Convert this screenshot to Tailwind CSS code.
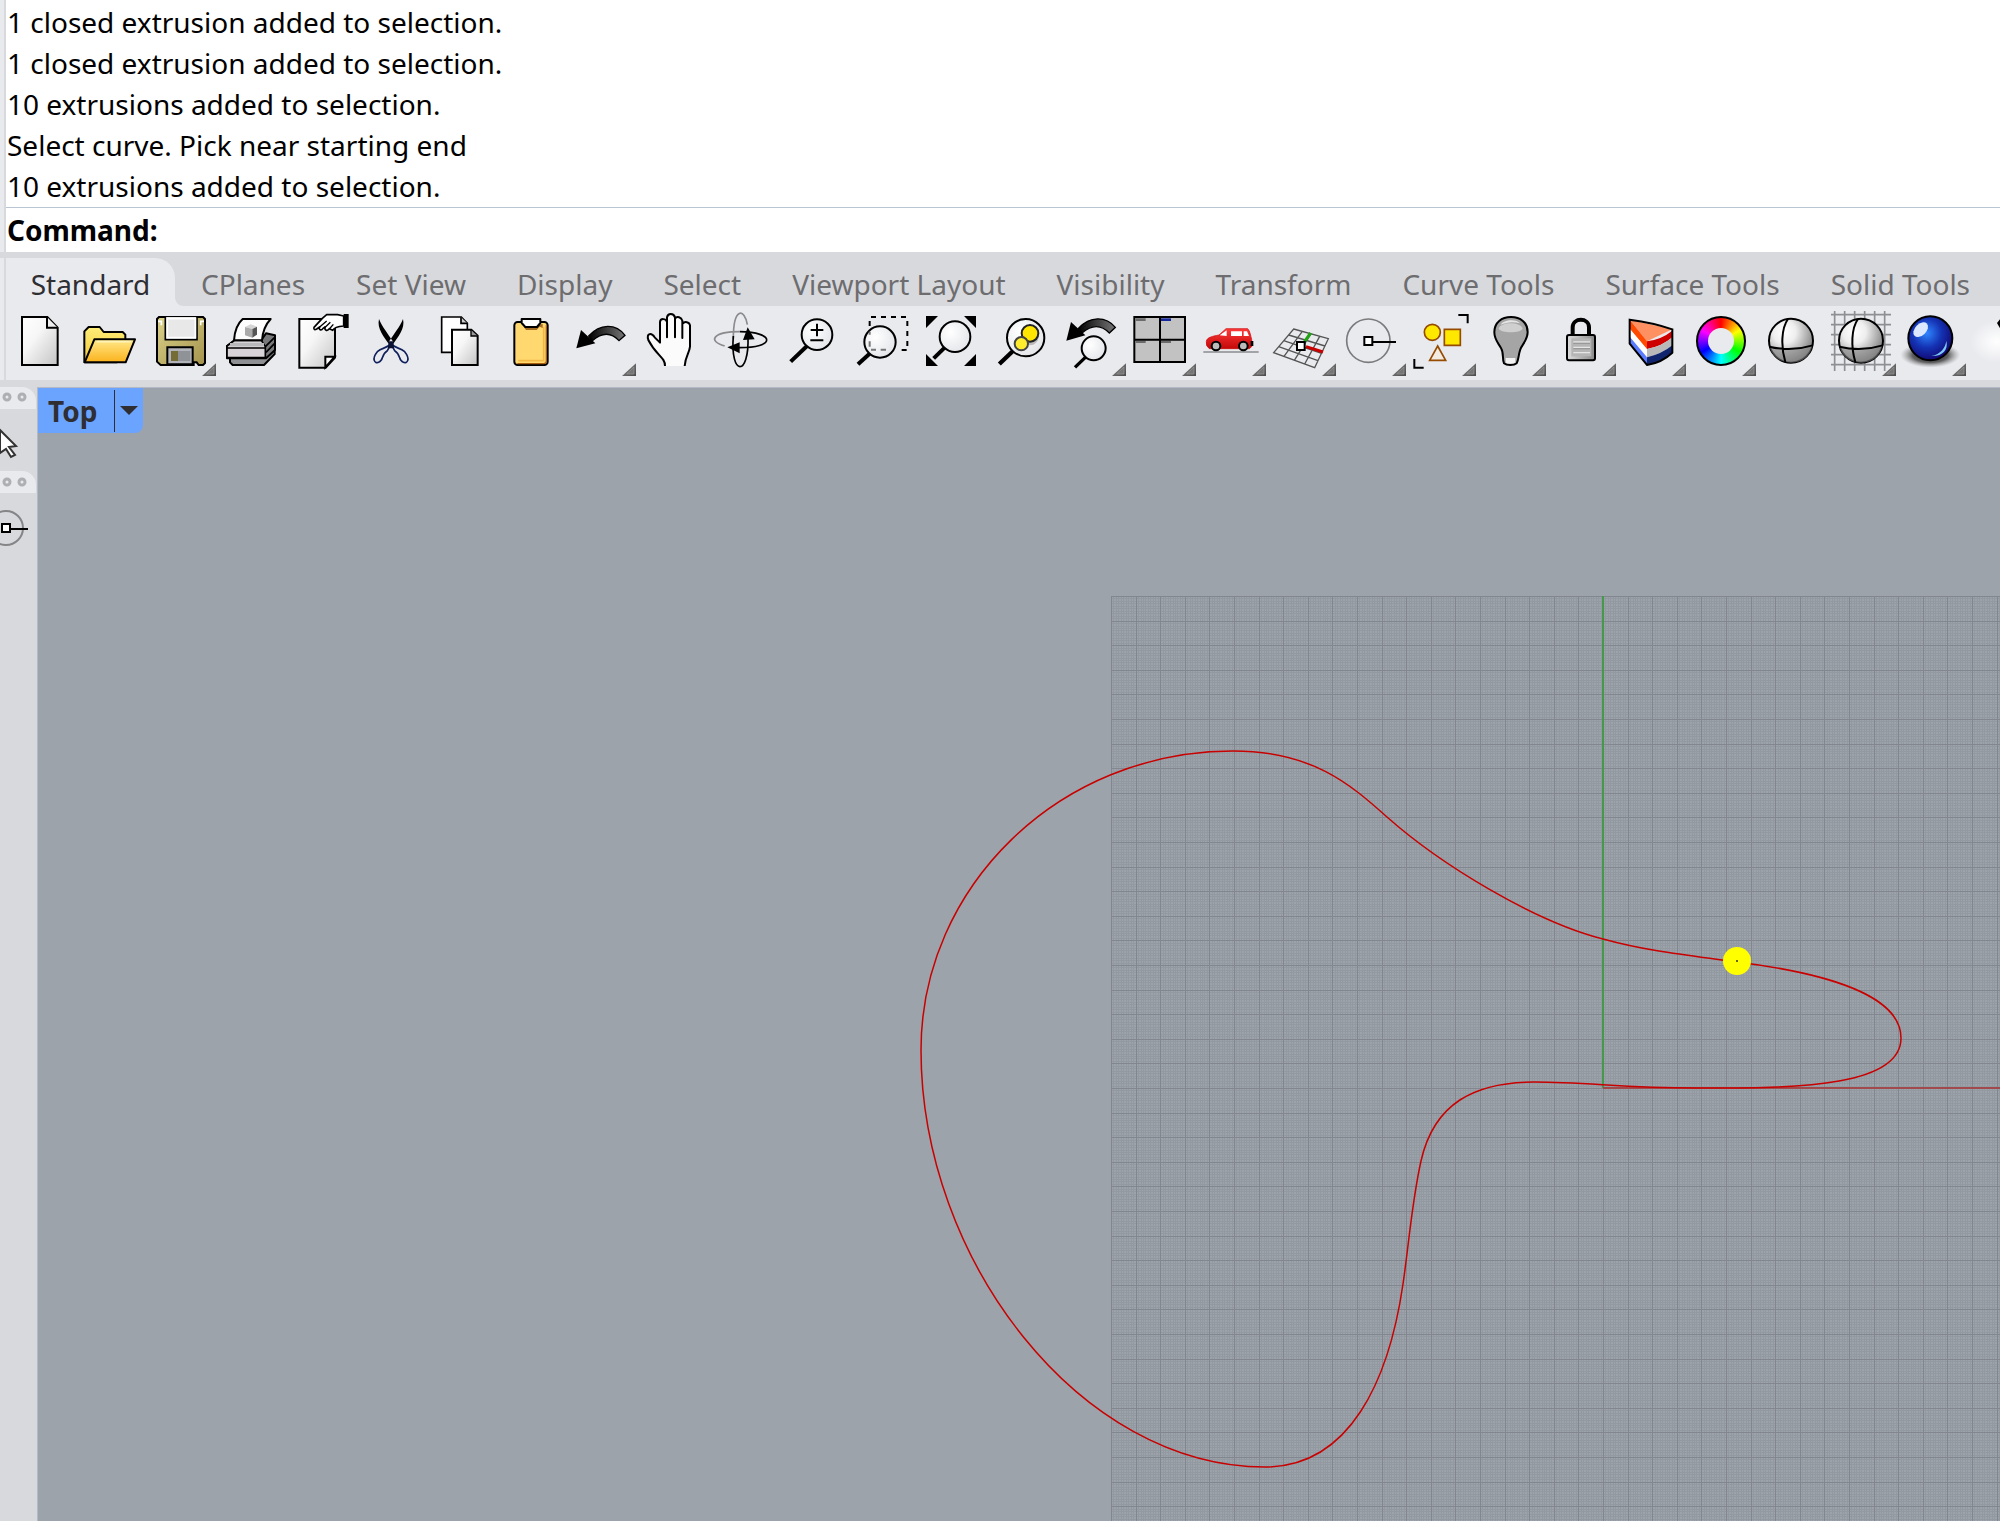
<!DOCTYPE html>
<html lang="en">
<head>
  <meta charset="UTF-8">
  <meta name="viewport" content="width=device-width, initial-scale=1.0">
  <title>Rhino - Top</title>
  <script src="https://cdn.jsdelivr.net/npm/@tailwindcss/browser@4"></script>
</head>
<body class="h-screen flex flex-col overflow-hidden bg-[#d8d9dd] font-['Noto_Sans','Open_Sans',sans-serif]">

  <!-- Shared drawing definitions -->
  <svg class="absolute w-0 h-0" aria-hidden="true">
    <defs>
      <linearGradient id="paper" x1="0" y1="0" x2="1" y2="1"><stop offset="0" stop-color="#fff"/><stop offset=".4" stop-color="#f6f6f6"/><stop offset="1" stop-color="#c4c4c4"/></linearGradient>
      <linearGradient id="folder" x1="0" y1="0" x2="0" y2="1"><stop offset="0" stop-color="#ffe98a"/><stop offset="1" stop-color="#fbb21c"/></linearGradient>
      <linearGradient id="folderBack" x1="0" y1="0" x2="0" y2="1"><stop offset="0" stop-color="#ffee78"/><stop offset="1" stop-color="#f0c838"/></linearGradient>
      <linearGradient id="disk" x1="0" y1="0" x2="1" y2="1"><stop offset="0" stop-color="#ddd48c"/><stop offset="1" stop-color="#a3924c"/></linearGradient>
      <linearGradient id="steel" x1="0" y1="0" x2="1" y2="0"><stop offset="0" stop-color="#ddd"/><stop offset="1" stop-color="#8a8a8a"/></linearGradient>
      <linearGradient id="arc" x1="0" y1="0" x2="1" y2="0"><stop offset="0" stop-color="#000"/><stop offset="1" stop-color="#777"/></linearGradient>
      <linearGradient id="car" x1="0" y1="0" x2="0" y2="1"><stop offset="0" stop-color="#ff3a3a"/><stop offset="1" stop-color="#c40808"/></linearGradient>
      <linearGradient id="fly" x1="0" y1="0" x2="1" y2="1"><stop offset="0" stop-color="#8a8a8a"/><stop offset="1" stop-color="#4a4a4a"/></linearGradient>
      <radialGradient id="lens" cx=".35" cy=".35" r=".7"><stop offset="0" stop-color="#fff"/><stop offset="1" stop-color="#e4e6ea"/></radialGradient>
      <radialGradient id="ball" cx=".35" cy=".3" r=".75"><stop offset="0" stop-color="#fff"/><stop offset=".35" stop-color="#eee"/><stop offset="1" stop-color="#777"/></radialGradient>
      <radialGradient id="blue" cx=".42" cy=".38" r=".6"><stop offset="0" stop-color="#2f86ff"/><stop offset=".55" stop-color="#1433b4"/><stop offset="1" stop-color="#120c78"/></radialGradient>
      <radialGradient id="shadow"><stop offset="0" stop-color="#000"/><stop offset=".6" stop-color="#333" stop-opacity=".75"/><stop offset="1" stop-color="#888" stop-opacity="0"/></radialGradient>
      <radialGradient id="glow"><stop offset="0" stop-color="#fff"/><stop offset="1" stop-color="#fff" stop-opacity="0"/></radialGradient>
      <g id="flyout"><path d="M168 210 210 172V210Z" fill="url(#fly)"/><path d="M182 204 204 183V204Z" fill="#757575" stroke="#999" stroke-width="2"/></g>
    </defs>
  </svg>

  <!-- Command history and prompt -->
  <section class="shrink-0 flex border-l-4 border-[#e9eaee]">
    <div class="flex-1 border-l-2 border-[#d8d9dd] bg-white text-[28px] text-black">
      <div class="pt-0.5 pl-px leading-[41px] border-b border-[#b9c5d2]" role="log">
        <p>1 closed extrusion added to selection.</p>
        <p>1 closed extrusion added to selection.</p>
        <p>10 extrusions added to selection.</p>
        <p>Select curve. Pick near starting end</p>
        <p>10 extrusions added to selection.</p>
      </div>
      <div class="flex h-11 items-center pl-px">
        <label for="command" class="font-bold">Command:</label>
        <input id="command" type="text" class="flex-1 ml-2 outline-none">
      </div>
    </div>
  </section>

  <!-- Toolbar tabs -->
  <nav class="shrink-0 mt-1.5 h-12 flex border-l-4 border-[#e9eaee] text-[28px] text-[#6d6d70] whitespace-nowrap">
    <div class="flex border-l-2 border-[#d8d9dd]">
      <button class="relative w-[169px] rounded-tr-[20px] bg-[#e9eaee] text-[#2e2e33] pt-1">Standard
        <svg class="absolute left-full bottom-0 size-2" viewBox="0 0 8 8"><path d="M0 0Q1 7 8 8H0Z" fill="#e9eaee"/></svg>
      </button>
      <div class="flex gap-[51px] pl-[26px] pt-1">
        <button>CPlanes</button>
        <button>Set View</button>
        <button>Display</button>
        <button>Select</button>
        <button>Viewport Layout</button>
        <button>Visibility</button>
        <button>Transform</button>
        <button>Curve Tools</button>
        <button>Surface Tools</button>
        <button>Solid Tools</button>
      </div>
    </div>
  </nav>

  <!-- Standard toolbar -->
  <div class="shrink-0 h-[74px] border-l-4 border-[#e9eaee]" role="toolbar" aria-label="Standard">
    <div class="flex h-full overflow-hidden border-l-2 border-[#d8d9dd] bg-[#e9eaee] *:shrink-0 *:w-[70px] [&_svg]:block [&_svg]:w-full [&_svg]:h-full [&_svg]:overflow-visible">
      <button aria-label="New"><svg viewBox="18 168 210 222">
        <path d="M66 201H142L173 233V345H66Z" fill="url(#paper)" stroke="#000" stroke-width="6"/><path d="M141 201V233H173" fill="#eee" stroke="#000" stroke-width="6"/>
      </svg></button>
      <button aria-label="Open"><svg viewBox="228 168 210 222">
        <path d="M253 337V244L266 231H299L311 246H368L376 254V290L350 337Z" fill="url(#folderBack)" stroke="#000" stroke-width="6" stroke-linejoin="round"/>
        <path d="M283 268H405L377 337H254Z" fill="url(#folder)" stroke="#000" stroke-width="6" stroke-linejoin="round"/><path d="M290 275H394" stroke="#fff3b8" stroke-width="5"/>
      </svg></button>
      <button aria-label="Save"><svg viewBox="438 168 210 222">
        <path d="M477 201H609L615 207V339L609 345H596L590 337H581V345H482L471 335V207Z" fill="url(#disk)" stroke="#000" stroke-width="6"/>
        <path d="M496 201V269H591V201" fill="#e2e2e2" stroke="#000" stroke-width="5"/><path d="M502 206H586V263H502Z" fill="#e8e8e8" stroke="#fff" stroke-width="5"/>
        <path d="M474 214H484V226M612 214H602V226" stroke="#fff" stroke-width="5" fill="none"/>
        <path d="M502 343V292H578V343Z" fill="#b3b4ba" stroke="#000" stroke-width="6"/><path d="M513 303H534V333H513Z" fill="#756b35"/><path d="M534 303H571V333H534Z" fill="#8f9296"/>
        <use href="#flyout" x="438" y="168"/>
      </svg></button>
      <button aria-label="Print"><svg viewBox="648 168 210 222">
        <path d="M690 318H792L824 290V312L792 345H698L690 337Z" fill="#8f9093" stroke="#000" stroke-width="6" stroke-linejoin="round"/>
        <path d="M681 288 704 270H784L798 250 825 256V300L798 325H681Z" fill="#77787a" stroke="#000" stroke-width="6" stroke-linejoin="round"/>
        <path d="M681 288 704 271H784L796 290V323H681Z" fill="#d8d3d6" stroke="#000" stroke-width="5" stroke-linejoin="round"/><path d="M681 294H796M796 290 824 262M798 307 824 280" stroke="#000" stroke-width="5" fill="none"/><path d="M690 284H792" stroke="#b9b9bb" stroke-width="10"/>
        <path d="M702 271C704 240 711 222 728 207H812C794 226 788 246 786 271Z" fill="#fdfdfd" stroke="#000" stroke-width="6" stroke-linejoin="round"/>
        <path d="M735 231 752 223 771 230 757 237Z" fill="#d5d5d5"/><path d="M735 231 757 237V263L735 256Z" fill="#ababab"/><path d="M757 237 771 230V254L757 263Z" fill="#555"/>
      </svg></button>
      <button aria-label="Document properties"><svg viewBox="858 168 210 222">
        <path d="M898 207H1005V323L977 353H898Z" fill="url(#paper)" stroke="#000" stroke-width="6"/><path d="M1004 320H976V352Z" fill="#fff" stroke="#000" stroke-width="6"/>
        <path d="M942 232C940 240 945 240 950 237L959 231C955 240 964 243 969 235L975 231C973 243 983 244 988 236L998 241C1001 235 1011 229 1031 228V198L1013 194H980L967 205Z" fill="#fff" stroke="#000" stroke-width="5" stroke-linejoin="round"/>
        <path d="M959 231 980 213M974 233 991 217M988 237 1000 223" stroke="#000" stroke-width="4"/><path d="M1031 192H1046V234H1031Z"/>
      </svg></button>
      <button aria-label="Cut"><svg viewBox="168 18 210 222">
        <path d="M237 57C230 85 252 112 268 134L280 126C262 98 247 82 237 57ZM309 57C316 85 294 112 278 134L266 126C284 98 299 82 309 57Z"/>
        <path d="M276 127C262 147 248 141 232 155C214 177 224 192 236 187C252 181 243 163 262 152ZM270 127C284 147 298 141 314 155C332 177 322 192 310 187C294 181 303 163 284 152Z" fill="none" stroke="#10205c" stroke-width="5"/>
        <path d="M267 124H279L283 145H263Z" fill="#0c1234"/>
      </svg></button>
      <button aria-label="Copy"><svg viewBox="378 18 210 222">
        <path d="M425 51H484L502 70V157H425Z" fill="#fff" stroke="#000" stroke-width="5"/><path d="M483 52V70H502" fill="#ccc" stroke="#000" stroke-width="5"/>
        <path d="M456 89H514L533 107V195H456Z" fill="url(#paper)" stroke="#000" stroke-width="6"/><path d="M513 90V108H533" fill="#999" stroke="#000" stroke-width="4"/>
      </svg></button>
      <button aria-label="Paste"><svg viewBox="588 18 210 222">
        <rect x="643" y="66" width="100" height="129" rx="10" fill="#ffd970" stroke="#000" stroke-width="6"/><path d="M739 76V184Q739 191 731 191H652" fill="none" stroke="#a85c0c" stroke-width="4"/><path d="M731 80V182H655" fill="none" stroke="#f3b843" stroke-width="5"/>
        <path d="M672 82 678 90H710L719 80 728 84V72Z" fill="#a56d22"/><path d="M665 57H721V69L711 81H676L665 69Z" fill="#fff" stroke="#000" stroke-width="6" stroke-linejoin="round"/>
      </svg></button>
      <button aria-label="Undo"><svg viewBox="798 18 210 222">
        <path d="M866 108C900 70 948 70 975 106L957 122C932 95 905 98 877 122Z" fill="url(#arc)" stroke="#000" stroke-width="4"/><path d="M829 145 843 90 886 130Z"/>
        <use href="#flyout" x="798" y="18"/>
      </svg></button>
      <button aria-label="Pan"><svg viewBox="-12 18 210 222">
        <path d="M75 198C76 172 48 166 25 120C18 98 35 98 44 112L60 130V66C61 54 78 55 80 66V52C84 38 101 39 105 52V54C111 47 124 52 127 62V72C134 62 148 66 150 76V140C148 160 136 168 134 198Z" fill="#fbfbfb"/>
        <path d="M75 198C76 172 48 166 25 120C18 98 35 98 44 112L60 128V66C61 54 78 55 81 66V112V52C84 38 101 39 105 52V112V56C111 47 124 52 127 62V114V72C134 62 148 66 150 76V140C148 160 136 168 134 198" fill="none" stroke="#000" stroke-width="6" stroke-linejoin="round"/>
      </svg></button>
      <button aria-label="Rotate view"><svg viewBox="198 18 210 222">
        <path d="M280 116C280 20 314 25 322 74M254 138C200 122 220 95 300 95" fill="none" stroke="#8b8b8e" stroke-width="5"/>
        <path d="M280 108C270 230 328 230 324 110" fill="none" stroke="#000" stroke-width="5"/><path d="M300 95C404 96 412 145 292 143" fill="none" stroke="#000" stroke-width="5"/>
        <path d="M323 82 344 118 309 120ZM262 142 299 127V160Z"/>
      </svg></button>
      <button aria-label="Zoom dynamic"><svg viewBox="408 18 210 222">
        <path d="M501 138 452 185" stroke="#000" stroke-width="12"/><circle cx="531" cy="104" r="46" fill="url(#lens)" stroke="#000" stroke-width="6"/><path d="M512 90H550M531 71V109M511 121H550" stroke="#000" stroke-width="6"/>
      </svg></button>
      <button aria-label="Zoom window"><svg viewBox="618 18 210 222">
        <path d="M692 158 654 193" stroke="#000" stroke-width="12"/><circle cx="720" cy="126" r="47" fill="url(#lens)" stroke="#000" stroke-width="6"/>
        <path d="M693 51H803M802 63V150M800 150H770M689 63V78" stroke="#000" stroke-width="6" stroke-dasharray="15 15" fill="none"/><path d="M689 95V104M689 124V140M693 149H708M722 149H738" stroke="#777" stroke-width="6"/>
      </svg></button>
      <button aria-label="Zoom extents"><svg viewBox="828 18 210 222">
        <path d="M858 48H894L858 84ZM1008 48H972L1008 84ZM858 198V162L894 198ZM1008 198V162L972 198Z"/>
        <path d="M917 140 881 175" stroke="#000" stroke-width="12"/><circle cx="945" cy="110" r="46" fill="url(#lens)" stroke="#000" stroke-width="6"/>
      </svg></button>
      <button aria-label="Zoom selected"><svg viewBox="18 18 210 222">
        <path d="M102 150 58 192" stroke="#000" stroke-width="13"/><circle cx="137" cy="113" r="56" fill="url(#lens)" stroke="#000" stroke-width="6"/><circle cx="150" cy="110" r="26" fill="#bbb"/><circle cx="150" cy="100" r="25" fill="#ffe500" stroke="#222" stroke-width="6"/><circle cx="124" cy="131" r="20" fill="#ffec2e" stroke="#444" stroke-width="6"/>
      </svg></button>
      <button aria-label="Undo view change"><svg viewBox="228 18 210 222">
        <path d="M295 85C330 47 378 48 406 82L388 99C362 72 334 75 306 99Z" fill="url(#arc)" stroke="#000" stroke-width="4"/><path d="M259 122 273 66 316 106Z"/>
        <path d="M316 172 285 202" stroke="#000" stroke-width="10"/><circle cx="341" cy="145" r="36" fill="url(#lens)" stroke="#000" stroke-width="6"/>
        <use href="#flyout" x="228" y="18"/>
      </svg></button>
      <button aria-label="Four viewports"><svg viewBox="438 18 210 222">
        <path d="M463 51H615V186H463Z" fill="#c2c2c2" stroke="#000" stroke-width="6"/><path d="M467 55H497V63H467ZM467 122H497V129H467ZM543 122H573V129H543Z" fill="#6b6b6b"/><path d="M543 55H573V63H543Z" fill="#14289c"/><path d="M540 51V186M463 119H615" stroke="#000" stroke-width="6"/>
        <use href="#flyout" x="438" y="18"/>
      </svg></button>
      <button aria-label="Set view"><svg viewBox="648 18 210 222">
        <path d="M670 156H836" stroke="#a2a3a6" stroke-width="6"/>
        <path d="M679 124C680 112 700 108 717 105L738 86H803C810 92 812 108 815 118V140L808 146H688Q676 138 679 124Z" fill="url(#car)" stroke="#c00" stroke-width="2"/>
        <path d="M719 106 740 91V108ZM753 94H786V108H753ZM791 94H801L807 108H791Z" fill="#fff"/><path d="M812 123H820V138H812Z"/>
        <circle cx="708" cy="138" r="13" fill="#bbb" stroke="#000" stroke-width="6"/><circle cx="790" cy="138" r="13" fill="#bbb" stroke="#000" stroke-width="6"/>
        <use href="#flyout" x="648" y="18"/>
      </svg></button>
      <button aria-label="Set CPlane"><svg viewBox="858 18 210 222">
        <path d="M941 87 1045 116 1004 203 881 158ZM967 94 912 169M993 101 943 181M1019 109 974 192M926 105 1035 138M911 122 1025 160M896 140 1014 182" fill="none" stroke="#555" stroke-width="4"/>
        <path d="M974 124 992 99" stroke="#1fa512" stroke-width="9"/><path d="M978 140 1029 156" stroke="#c80000" stroke-width="9"/><path d="M951 126H974V150H951Z" fill="#fff" stroke="#000" stroke-width="6"/>
        <use href="#flyout" x="858" y="18"/>
      </svg></button>
      <button aria-label="Object snap"><svg viewBox="48 18 210 222">
        <circle cx="145" cy="122" r="65" fill="none" stroke="#7b7b7d" stroke-width="5"/><path d="M158 126H228" stroke="#000" stroke-width="6"/><path d="M133 111H157V135H133Z" fill="#fff" stroke="#000" stroke-width="6"/>
        <use href="#flyout" x="48" y="18"/>
      </svg></button>
      <button aria-label="Select"><svg viewBox="258 18 210 222">
        <path d="M415 45H443V70M283 177V203H311" fill="none" stroke="#000" stroke-width="6"/>
        <g stroke="#964b00" stroke-width="5"><circle cx="337" cy="97" r="24" fill="#ffe800"/><path d="M373 88H421V136H373Z" fill="#ffe800"/><path d="M353 138 377 181H329Z" fill="#f3ece2"/></g>
        <use href="#flyout" x="258" y="18"/>
      </svg></button>
      <button aria-label="Hide"><svg viewBox="468 18 210 222">
        <path d="M552 190C546 178 552 160 544 146C536 130 523 120 523 97C523 67 545 51 573 51C601 51 623 67 623 97C623 120 606 134 601 148C595 164 596 180 590 190C582 197 560 197 552 190Z" fill="#a5a5a5" stroke="#000" stroke-width="6"/>
        <path d="M536 86C540 64 604 64 608 86C600 100 545 100 536 86Z" fill="#cfcfcf"/><path d="M542 74C550 58 590 56 600 70C580 64 560 66 542 74Z" fill="#e6e6e6"/><path d="M557 174H586V188Q570 194 557 188Z" fill="#f2f2f2"/>
        <use href="#flyout" x="468" y="18"/>
      </svg></button>
      <button aria-label="Lock"><svg viewBox="678 18 210 222">
        <path d="M758 103V82C758 52 807 52 807 82V103" fill="none" stroke="#000" stroke-width="12"/><rect x="741" y="105" width="84" height="76" rx="6" fill="url(#steel)" stroke="#000" stroke-width="6"/><rect x="754" y="115" width="60" height="54" fill="#b5b5b5"/><path d="M760 126H810M760 142H810M760 158H810" stroke="#e5e5e5" stroke-width="4"/><path d="M760 130H810M760 146H810" stroke="#999" stroke-width="4"/>
        <use href="#flyout" x="678" y="18"/>
      </svg></button>
      <button aria-label="Layers"><svg viewBox="888 18 210 222">
        <path d="M929 59 1057 88 981 124Z" fill="#ff9062"/><path d="M929 59 981 124V148L929 86Z" fill="#ff4a00"/><path d="M929 86 981 148V172L929 110Z" fill="#fff"/><path d="M929 110 981 172V195L929 131Z" fill="#5b7cff"/>
        <path d="M981 124Q1025 118 1057 92V112Q1025 140 981 147Z" fill="#cf0000"/><path d="M981 147Q1025 140 1057 112V136Q1025 162 981 172Z" fill="#b9b9b9"/><path d="M981 172Q1025 162 1057 136V158Q1025 188 981 195Z" fill="#11256f"/>
        <path d="M929 59Q1000 68 1057 88V158Q1025 188 981 195L929 131Z" fill="none" stroke="#000" stroke-width="6"/>
        <use href="#flyout" x="888" y="18"/>
      </svg></button>
      <button aria-label="Properties" class="relative">
        <span class="absolute left-[10px] top-[10px] size-[50px] rounded-full border-2 border-black bg-[conic-gradient(#f00,#ff0_60deg,#0f0_120deg,#0ff_180deg,#00f_240deg,#f0f_300deg,#f00)]"></span>
        <span class="absolute left-[22px] top-[22px] size-[26px] rounded-full bg-[#e9eaee]"></span>
        <svg class="relative" viewBox="78 168 210 222"><use href="#flyout" x="78" y="168"/></svg>
      </button>
      <button aria-label="Shade"><svg viewBox="288 168 210 222">
        <circle cx="393" cy="272" r="66" fill="url(#ball)" stroke="#000" stroke-width="6"/><path d="M329 291Q393 305 457 287Q446 336 393 338Q342 336 329 291Z" fill="#888" opacity=".55"/><path d="M384 207C364 235 362 290 376 336M328 290Q393 306 458 286" fill="none" stroke="#000" stroke-width="6"/>
      </svg></button>
      <button aria-label="Shade selected"><svg viewBox="498 168 210 222">
        <path d="M524 183V363M554 183V363M584 183V363M614 183V363M644 183V363M674 183V363M513 194H693M513 224H693M513 254H693M513 284H693M513 314H693M513 344H693" stroke="#8e8f92" stroke-width="5"/>
        <circle cx="603" cy="272" r="66" fill="url(#ball)" stroke="#000" stroke-width="6"/><path d="M539 291Q603 305 667 287Q656 336 603 338Q552 336 539 291Z" fill="#888" opacity=".55"/><path d="M594 207C574 235 572 290 586 336M538 290Q603 306 668 286" fill="none" stroke="#000" stroke-width="6"/>
        <use href="#flyout" x="498" y="168"/>
      </svg></button>
      <button aria-label="Render"><svg viewBox="708 168 210 222">
        <ellipse cx="811" cy="315" rx="90" ry="38" fill="url(#shadow)"/><circle cx="811" cy="265" r="66" fill="url(#blue)" stroke="#000" stroke-width="6"/>
        <ellipse cx="782" cy="239" rx="26" ry="17" transform="rotate(-45 782 239)" fill="#dbe8ff"/><path d="M814 318C842 312 856 294 859 272C866 300 846 320 814 318Z" fill="#7cc8f4"/>
        <use href="#flyout" x="708" y="168"/>
      </svg></button>
      <button aria-label="Spotlight"><svg viewBox="918 168 210 222">
        <ellipse cx="1010" cy="275" rx="80" ry="64" fill="url(#glow)"/><path d="M1011 219 1020 208 1034 222 1022 238Z"/>
      </svg></button>
    </div>
  </div>

  <main class="flex-1 min-h-0 flex pt-[7px]">
    <!-- Docked side bars -->
    <aside class="w-[37px] shrink-0 overflow-hidden [&_svg]:block">
      <div class="h-[22px] w-9 rounded-tr-[14px] bg-[#e9eaee]">
        <svg width="36" height="22" fill="none" stroke="#aeafb2" stroke-width="3"><circle cx="7" cy="10" r="3"/><circle cx="22" cy="10" r="3"/></svg>
      </div>
      <button aria-label="Cancel" class="block h-[62px] w-9">
        <svg width="36" height="62" viewBox="0 409 36 62"><path d="M0 430 16 446 9 447 15 455 11 457 6 449 0 453Z" fill="#fff" stroke="#333" stroke-width="2"/></svg>
      </button>
      <div class="h-[22px] w-9 rounded-tr-[14px] bg-[#e9eaee]">
        <svg width="36" height="22" fill="none" stroke="#aeafb2" stroke-width="3"><circle cx="7" cy="11" r="3"/><circle cx="22" cy="11" r="3"/></svg>
      </div>
      <button aria-label="Osnap" class="block h-[70px] w-9">
        <svg width="36" height="70" viewBox="0 493 36 70"><circle cx="6" cy="528" r="17" fill="none" stroke="#858588" stroke-width="2"/><path d="M10 529H28" stroke="#000" stroke-width="2"/><path d="M2 524H10V532H2Z" fill="#fff" stroke="#000" stroke-width="2"/></svg>
      </button>
    </aside>

    <!-- Top viewport -->
    <section class="relative flex-1 min-w-0 border-l border-t border-[#b3b9c6] bg-[#9da3aa]" aria-label="Top viewport">
      <svg class="block w-full h-full" aria-hidden="true">
        <g transform="translate(-38 -388)">
          <g shape-rendering="crispEdges" fill="none">
            <path id="minor" stroke="#9399a1"/>
            <path id="major" stroke="#82868e"/>
            <path d="M1603 596V1088" stroke="#45994b" stroke-width="2"/>
            <path d="M1603 1088H2600" stroke="#a04a4c" stroke-width="2"/>
          </g>
          <path fill="none" stroke="#c80000" stroke-width="1.5" d="M921 1050C921 887 1059 751 1233 751C1312 751 1350 784 1387 817C1440 864 1533 921 1603 939C1650 952 1695 956 1737 962C1825 973 1901 995 1901 1038C1901 1086 1800 1088 1708 1088C1630 1089 1590 1082 1534 1082C1475 1082 1434 1103 1421 1161C1412 1201 1409 1243 1403 1284C1389 1380 1350 1467 1265 1467C1080 1467 921 1260 921 1050Z"/>
          <circle cx="1737" cy="961" r="14" fill="#ff0"/>
          <circle cx="1737" cy="961" r="1" fill="#333"/>
        </g>
      </svg>
      <div class="absolute left-0 top-0 flex h-[45px] items-center rounded-br-lg bg-[#6ba4ff] text-[#2e2e33]">
        <button class="w-[76px] pl-2.5 text-left text-[28px] leading-10 font-bold">Top</button>
        <button aria-label="Viewport menu" class="h-[42px] w-[29px] border-l border-[#2e2e33]">
          <svg class="ml-[5px]" width="18" height="10"><path d="M0 0H18L9 9Z" fill="#2e2e33"/></svg>
        </button>
      </div>
    </section>
  </main>

  <script>
    // Construction plane grid: 10 minor cells in each major one
    const left = 1111, top0 = 596, step = 24.6;
    const right = 2600, bottom = 2200;
    let minor = '', major = '';
    for (let i = 0; i <= 600; i++) {
      const x = Math.round(left + i * step / 10) + 0.5;
      const y = Math.round(top0 + i * step / 10) + 0.5;
      const line = `M${x} ${top0}V${bottom}M${left} ${y}H${right}`;
      if (i % 10 === 0) major += line; else minor += line;
    }
    document.getElementById('minor').setAttribute('d', minor);
    document.getElementById('major').setAttribute('d', major);
  </script>
</body>
</html>
